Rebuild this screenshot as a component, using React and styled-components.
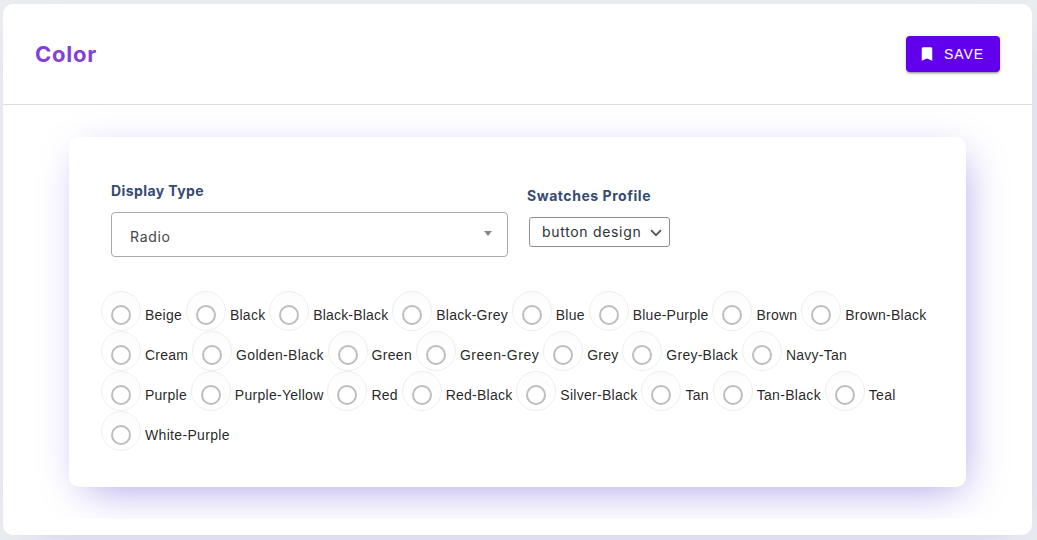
import React from "react";
import styled, { createGlobalStyle } from "styled-components";

const GlobalStyle = createGlobalStyle`
  *, *::before, *::after { box-sizing: border-box; }
  body {
    margin: 0;
    height: 540px;
    overflow: hidden;
    background: #e9edf0;
    font-family: "Liberation Sans", sans-serif;
  }
`;

const Panel = styled.main`
  margin: 4px 5px 0 3px;
  height: 531px;
  border-radius: 10px;
  background: #fff;
  box-shadow: 6px 11px 41px -28px #a99de7;
`;

const Header = styled.header`
  display: flex;
  align-items: center;
  justify-content: space-between;
  height: 101px;
  padding: 0 32px;
  border-bottom: 1px solid #dcdcdc;
`;

const Title = styled.h1`
  margin: 0;
  color: #8240d8;
  font: 700 22px/28px "Inter", sans-serif;
  letter-spacing: ${(p) => p.$spacing};
`;

const SaveButton = styled.button`
  display: flex;
  align-items: center;
  gap: 8px;
  width: 94px;
  height: 36px;
  padding: 0 12px;
  border: 0;
  border-radius: 4px;
  background: #6200ee;
  color: #fff;
  font: 400 14px/36px "Liberation Sans", sans-serif;
  letter-spacing: 0.9px;
  box-shadow: 0 3px 1px -2px rgba(0, 0, 0, 0.2), 0 2px 2px rgba(0, 0, 0, 0.14),
    0 1px 5px rgba(0, 0, 0, 0.12);
`;

const Content = styled.div`
  height: 414px;
  padding: 32px 66px;
  overflow: hidden;
`;

const Card = styled.section`
  height: 350px;
  padding: 42px 32px 0;
  border-radius: 10px;
  background: #fff;
  box-shadow: 6px 11px 41px -10px #a99de7;
`;

const Fields = styled.div`
  display: flex;
  gap: 19px;
  height: 112px;
  padding-left: 10px;
`;

const Field = styled.div`
  padding-top: ${(p) => p.$top || 0}px;
`;

const Label = styled.div`
  color: #344b73;
  font: 700 14px/24px "Inter", sans-serif;
  letter-spacing: ${(p) => p.$spacing};
`;

const SelectBox = styled.div`
  display: flex;
  justify-content: space-between;
  width: 397px;
  height: 45px;
  margin-top: 9px;
  padding: 0 15px 0 18px;
  border: 1px solid #aaa;
  border-radius: 4px;
  color: #444;
  font: 400 14px/48px "Inter", sans-serif;
  letter-spacing: 0.7px;
`;

const Caret = styled.span`
  margin-top: 18px;
  width: 0;
  height: 0;
  border: 4px solid transparent;
  border-top: 5px solid #888;
  border-bottom: 0;
`;

const CompactSelect = styled.div`
  display: flex;
  align-items: center;
  justify-content: space-between;
  width: 141px;
  height: 30px;
  margin: 9px 0 0 2px;
  padding: 0 7px 0 12px;
  border: 1px solid #8c8f94;
  border-radius: 3px;
  color: #2c3338;
  font: 400 14px/28px "Inter", sans-serif;
  letter-spacing: 0.68px;
  white-space: nowrap;
`;

const Options = styled.div`
  display: flex;
  flex-wrap: wrap;
  width: 834px;
`;

const Option = styled.label`
  display: flex;
  height: 40px;
  margin-right: 3.85px;
  color: rgba(0, 0, 0, 0.87);
  font-size: 14px;
  line-height: 48px;
  letter-spacing: ${(p) => p.$spacing || 0.25}px;
  white-space: nowrap;
`;

const Ripple = styled.span`
  width: 40px;
  height: 40px;
  margin-right: 4px;
  padding: 13px 9px 0;
  border: 1px solid #eeeeee;
  border-radius: 50%;
  background: linear-gradient(#fcfcfc, #fff 60%);
`;

const Radio = styled.input`
  display: block;
  appearance: none;
  width: 20px;
  height: 20px;
  margin: 0;
  border: 2px solid #bdbdbd;
  border-radius: 50%;
  background: #fff;
`;

const colors = [
  ["Beige"], ["Black"], ["Black-Black", 0.18], ["Black-Grey"], ["Blue"], ["Blue-Purple"],
  ["Brown"], ["Brown-Black"],
  ["Cream"], ["Golden-Black", 0.3], ["Green", 0.3], ["Green-Grey", 0.55], ["Grey"],
  ["Grey-Black"], ["Navy-Tan"],
  ["Purple"], ["Purple-Yellow", 0.28], ["Red"], ["Red-Black"], ["Silver-Black", 0.28],
  ["Tan"], ["Tan-Black", 0.32], ["Teal"],
  ["White-Purple", 0.33],
];

export default function App() {
  return (
    <>
      <GlobalStyle />
      <Panel>
        <Header>
          <Title $spacing="0.75px">Color</Title>
          <SaveButton>
            <svg width="18" height="18" viewBox="0 0 24 24" fill="currentColor">
              <path d="M17 3H7c-1.1 0-1.99.9-1.99 2L5 21l7-3 7 3V5c0-1.1-.9-2-2-2z" />
            </svg>
            SAVE
          </SaveButton>
        </Header>
        <Content>
          <Card>
            <Fields>
              <Field>
                <Label $spacing="0.42px">Display Type</Label>
                <SelectBox>
                  Radio
                  <Caret />
                </SelectBox>
              </Field>
              <Field $top={5}>
                <Label $spacing="0.55px">Swatches Profile</Label>
                <CompactSelect>
                  button design
                  <svg width="12" height="12" viewBox="0 0 12 12" fill="none" stroke="#555" strokeWidth="1.8">
                    <path d="M1 4.2l5 5 5-5" />
                  </svg>
                </CompactSelect>
              </Field>
            </Fields>
            <Options>
              {colors.map(([name, spacing]) => (
                <Option key={name} $spacing={spacing}>
                  <Ripple>
                    <Radio type="radio" name="color" />
                  </Ripple>
                  {name}
                </Option>
              ))}
            </Options>
          </Card>
        </Content>
      </Panel>
    </>
  );
}
